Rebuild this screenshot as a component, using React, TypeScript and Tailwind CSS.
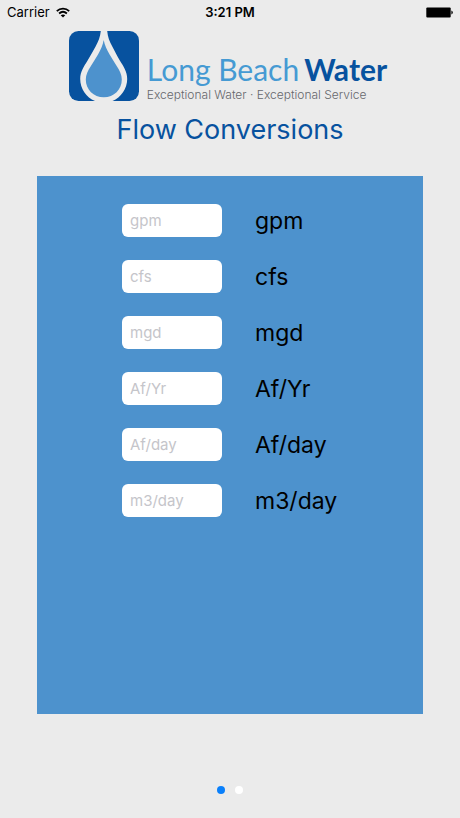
import React, { useState } from 'react';

const UNITS = ['gpm', 'cfs', 'mgd', 'Af/Yr', 'Af/day', 'm3/day'];

const StatusBar = () => (
  <div className="grid grid-cols-3 items-center h-6 px-[7px] text-[13px] leading-6 text-black">
    <div className="flex items-center gap-[6px]">
      <span>Carrier</span>
      <svg className="w-[14px] h-[11px]" viewBox="0 0 14 11" fill="none" stroke="#000" strokeWidth="1.8">
        <path d="M0.8 4.1 C4.3 0.7 9.7 0.7 13.2 4.1" />
        <path d="M3.1 6.5 C5.4 4.4 8.6 4.4 10.9 6.5" />
        <path d="M7 10.6 L4.7 8.3 C6 7.1 8 7.1 9.3 8.3 Z" fill="#000" stroke="none" />
      </svg>
    </div>
    <span className="text-center font-semibold">3:21 PM</span>
    <svg className="justify-self-end w-[27px] h-[11px]" viewBox="0 0 27 11">
      <rect x="0.3" y="0.5" width="24.4" height="10" rx="1" fill="#000" />
      <path d="M25.4 3.6 q1.4 0.4 1.4 1.9 t-1.4 1.9 z" fill="#000" />
    </svg>
  </div>
);

const Logo = () => (
  <div className="flex justify-center gap-[8px] mt-[7px] pr-[4px]">
    <svg className="w-[70px] h-[70px] shrink-0" viewBox="0 0 70 70">
      <rect width="70" height="70" rx="9.5" fill="#07529f" />
      <path d="M31.8 0 H38.2 C38.8 6 40.5 10.5 43.3 15.6 C45.8 20.2 48 25 50.8 29.5 C54.5 35.5 58.2 40.5 58.2 48 C58.2 57.5 52 66.5 43.5 70 H26 C17.2 66.5 11.2 57.5 11.2 48 C11.2 40.5 15 35.5 18.6 29.5 C21.4 25 24 20.2 26.6 15.6 C29.3 10.5 31.2 6 31.8 0 Z" fill="#ebebeb" />
      <path d="M34.7 9 C35.6 14 38 19 40.6 23.5 C43 27.5 45.5 31.5 48 35.5 C50.6 39.5 52.8 43.5 52.8 48.5 C52.8 58.5 45 66.3 34.8 66.3 C24.6 66.3 16.8 58.5 16.8 48.5 C16.8 43.5 19 39.5 21.6 35.5 C24.1 31.5 26.6 27.5 29 23.5 C31.6 19 33.9 14 34.7 9 Z" fill="#4d92cd" />
    </svg>
    <div className="pt-[19px] font-[Lato,sans-serif]">
      <div className="flex gap-[5px] text-[30px] leading-[38px] whitespace-nowrap">
        <span className="text-[#459ad3]">Long Beach</span>
        <span className="font-bold text-[#07529f]">Water</span>
      </div>
      <p className="text-[12px] leading-[14px] font-light text-[#66676b] font-[Inter,sans-serif] whitespace-nowrap">
        Exceptional Water · Exceptional Service
      </p>
    </div>
  </div>
);

export default function App() {
  const [values, setValues] = useState<Record<string, string>>({});
  const [page, setPage] = useState(0);

  return (
    <div className="flex flex-col min-h-screen bg-[#ebebeb] font-[Inter,sans-serif]">
      <StatusBar />
      <Logo />
      <h1 className="mt-[10px] text-center text-[27px] leading-[36px] text-[#07529f]">Flow Conversions</h1>

      {/* Converter fields */}
      <main className="flex-1 mt-[28px] mx-[37px] pt-[27px] bg-[#4d92cd]">
        <div className="flex flex-col gap-[22px] pl-[85px]">
          {UNITS.map(unit => (
            <div key={unit} className="flex items-center gap-[33px]">
              <input
                id={unit}
                type="text"
                inputMode="decimal"
                placeholder={unit}
                value={values[unit] ?? ''}
                onChange={e => setValues({ ...values, [unit]: e.target.value })}
                className="w-[100px] h-[33px] px-2 rounded-[6px] bg-white text-[15px] text-black placeholder:text-[#c5c5ca] outline-none"
              />
              <label htmlFor={unit} className="text-[23px] leading-[32px] pt-[2px] text-black">{unit}</label>
            </div>
          ))}
        </div>
      </main>

      {/* Page dots */}
      <nav className="flex justify-center items-start gap-[10px] h-[104px] pt-[72px]">
        {[0, 1].map(i => (
          <button
            key={i}
            type="button"
            aria-label={`Page ${i + 1}`}
            onClick={() => setPage(i)}
            className={`w-2 h-2 rounded-full ${page === i ? 'bg-[#0a80fb]' : 'bg-white'}`}
          />
        ))}
      </nav>
    </div>
  );
}
